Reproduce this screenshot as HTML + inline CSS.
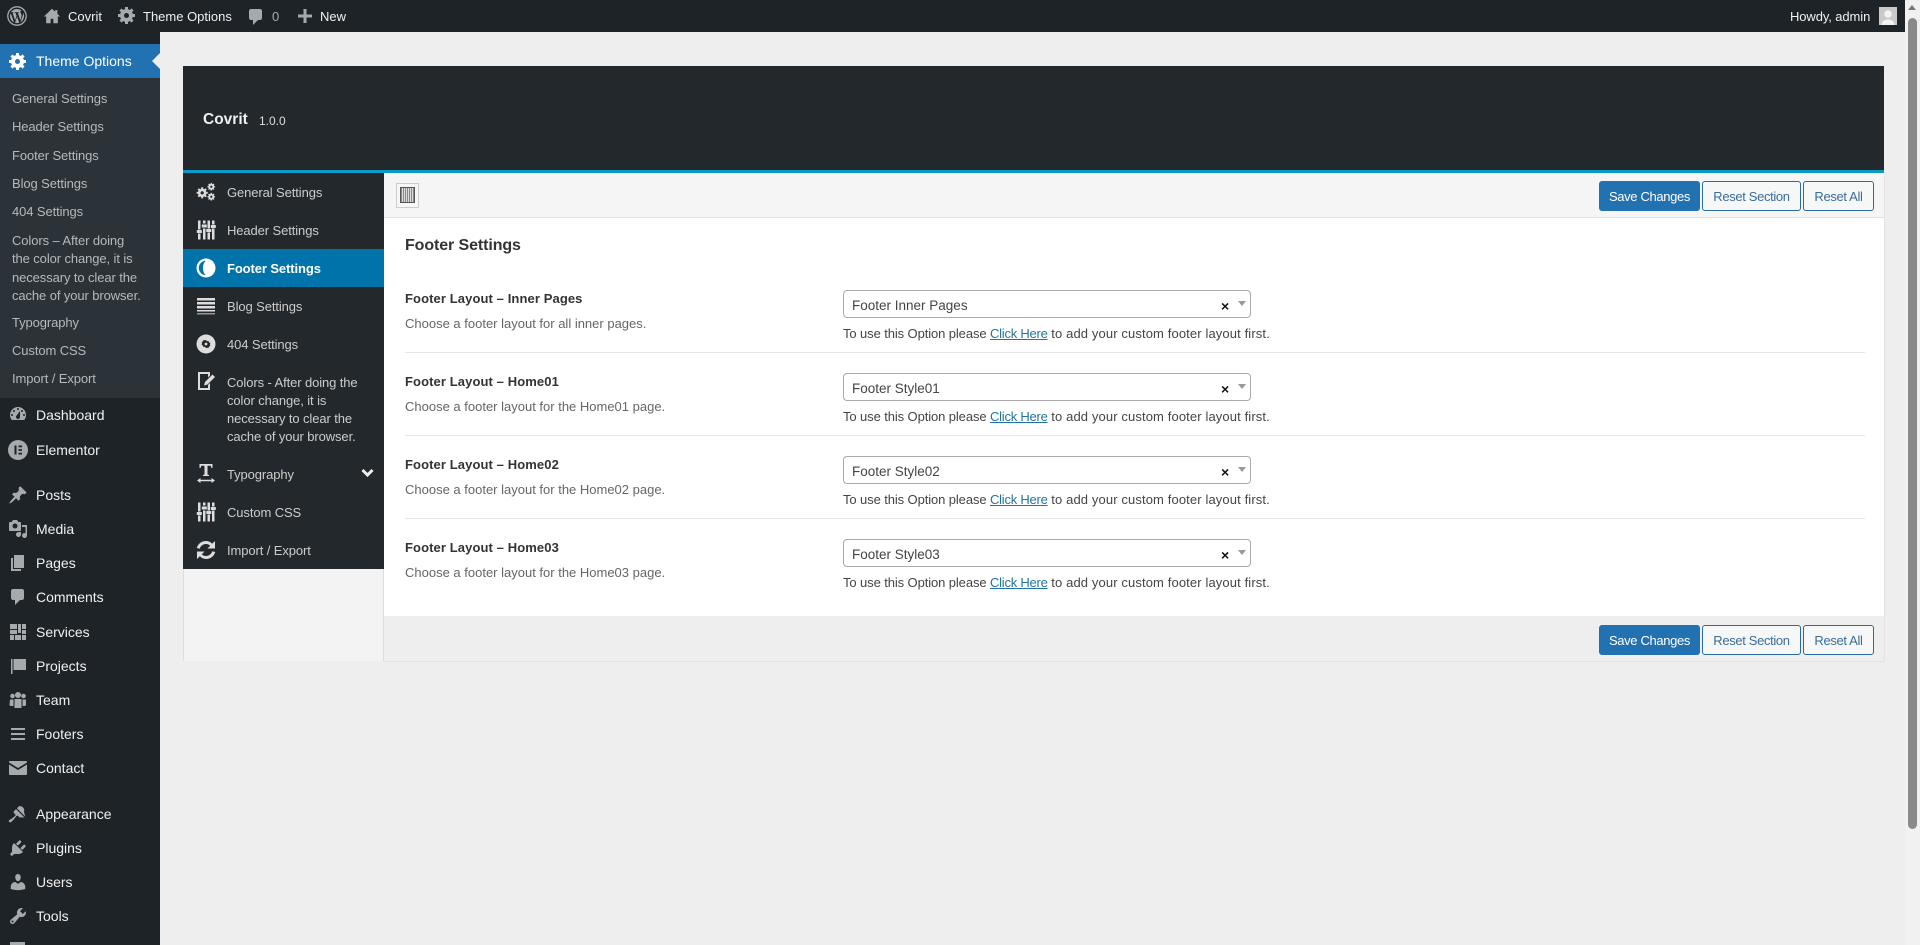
<!DOCTYPE html>
<html lang="en"><head><meta charset="utf-8"><title>Theme Options</title>
<style>
html,body{margin:0;padding:0;width:1920px;height:945px;overflow:hidden;background:#eee;font-family:"Liberation Sans",Arial,sans-serif;font-size:13px}
.a{position:absolute}
.t{position:absolute;white-space:nowrap;line-height:20px}
svg{position:absolute;overflow:visible}
#bar{left:0;top:0;width:1905px;height:32px;background:#1d2327}
.w{color:#f0f0f1;font-size:13px;margin-top:1px}
#side{left:0;top:32px;width:160px;height:913px;background:#1d2327}
.m{color:#f0f0f1;font-size:14px;left:36px}
.s{color:#b5b9bd;font-size:13px;left:12px;letter-spacing:-.1px;margin-top:1px}
.n{color:#ccc;font-size:13px;left:227px;letter-spacing:-.1px;margin-top:1px}
.lb{left:405px;font-weight:bold;font-size:13px;color:#333;letter-spacing:.1px}
.ds{left:405px;font-size:13px;color:#666;margin-top:1px}
.hp{left:843px;font-size:13px;color:#444;margin-top:1px;letter-spacing:.12px}
.hp i{font-style:normal;letter-spacing:-.1px}
.hp a{color:#21759b;letter-spacing:-.24px}
.sl{position:absolute;left:843px;width:406px;height:26px;border:1px solid #aaa;border-radius:4px;background:#fff}
.sl span{position:absolute;left:8px;top:5px;line-height:20px;font-size:13.5px;color:#444}
.sl b{position:absolute;left:377px;top:5px;line-height:20px;font-size:14px;color:#111}
.sl i{position:absolute;left:394px;top:10px;border:4px solid transparent;border-top:5px solid #999;border-bottom:0}
.sp{position:absolute;left:405px;width:1460px;height:1px;background:#e7e7e7}
.b{position:absolute;height:28px;line-height:30px;text-align:center;border:1px solid #2a6a9e;border-radius:3px;font-size:13px;box-sizing:content-box;color:#3a6d9a;background:#f6f7f7;letter-spacing:-.35px}
.b.p{background:#2271b1;border-color:#2271b1;color:#fff}
.ic{fill:#a7aaad}
.nv{fill:#ddd}
</style></head><body>
<svg width="0" height="0" style="position:absolute"><defs>
<symbol id="gear" viewBox="0 0 20 20"><path fill-rule="evenodd" d="M18 12h-2.180c-.17.7-.44 1.350-.81 1.930l1.540 1.540-2.100 2.100-1.540-1.540c-.58.36-1.230.63-1.910.79V19H8v-2.180c-.68-.16-1.330-.43-1.910-.79l-1.540 1.540-2.120-2.120 1.540-1.540c-.36-.58-.63-1.230-.79-1.910H1V9.030h2.170c.16-.7.44-1.350.8-1.940L2.430 5.550l2.100-2.100 1.540 1.540c.58-.37 1.240-.64 1.930-.81V2h3v2.180c.68.16 1.330.43 1.910.79l1.540-1.540 2.120 2.120-1.540 1.540c.36.59.64 1.240.8 1.940H18V12zM9.500 13a2.500 2.500 0 1 0 0-5 2.500 2.500 0 0 0 0 5z"/></symbol>
<symbol id="sliders" viewBox="0 0 20 20"><path d="M2 .5h2.500v9H2zM2 13.500h2.500v6H2zM7 .5h2.500v3H7zM7 8.500h2.500v11H7zM11.500 .5h2.500v8h-2.500zM11.500 12.500h2.500v7h-2.500zM16 .5h2.500v4H16zM16 8.500h2.500v11H16zM.8 10h5v3h-5zM5.800 4.500h5v3h-5zM10.300 9h5v3h-5zM14.800 5h5v3h-5z"/></symbol>
</defs></svg>

<div id="side" class="a"></div>
<div class="a" style="left:0;top:44px;width:160px;height:34px;background:#2271b1"></div>
<div class="a" style="left:0;top:78px;width:160px;height:320px;background:#2c3338"></div>
<div class="a" style="left:152px;top:53px;border:8px solid transparent;border-right-color:#eee;border-left:0"></div>
<svg style="left:8px;top:51px" width="20" height="20" fill="#fff"><use href="#gear"/></svg>
<div class="t m" style="top:51px;color:#fff">Theme Options</div>
<div class="t s" style="top:88px">General Settings</div>
<div class="t s" style="top:116px">Header Settings</div>
<div class="t s" style="top:145px">Footer Settings</div>
<div class="t s" style="top:173px">Blog Settings</div>
<div class="t s" style="top:201px">404 Settings</div>
<div class="t s" style="top:230px">Colors – After doing</div>
<div class="t s" style="top:248px">the color change, it is</div>
<div class="t s" style="top:267px">necessary to clear the</div>
<div class="t s" style="top:285px">cache of your browser.</div>
<div class="t s" style="top:312px">Typography</div>
<div class="t s" style="top:340px">Custom CSS</div>
<div class="t s" style="top:368px">Import / Export</div>

<div class="t m" style="top:405px">Dashboard</div>
<div class="t m" style="top:440px">Elementor</div>
<div class="t m" style="top:485px">Posts</div>
<div class="t m" style="top:519px">Media</div>
<div class="t m" style="top:553px">Pages</div>
<div class="t m" style="top:587px">Comments</div>
<div class="t m" style="top:622px">Services</div>
<div class="t m" style="top:656px">Projects</div>
<div class="t m" style="top:690px">Team</div>
<div class="t m" style="top:724px">Footers</div>
<div class="t m" style="top:758px">Contact</div>
<div class="t m" style="top:804px">Appearance</div>
<div class="t m" style="top:838px">Plugins</div>
<div class="t m" style="top:872px">Users</div>
<div class="t m" style="top:906px">Tools</div>

<svg class="ic" style="left:8px;top:404px" width="20" height="20" viewBox="0 0 20 20"><path fill-rule="evenodd" d="M3.760 16h12.480c1.100-1.370 1.760-3.110 1.760-5 0-4.420-3.580-8-8-8s-8 3.580-8 8c0 1.890.66 3.630 1.760 5zM10 4c.55 0 1 .45 1 1s-.45 1-1 1-1-.45-1-1 .45-1 1-1zM6 6c.55 0 1 .45 1 1s-.45 1-1 1-1-.45-1-1 .45-1 1-1zm8 0c.55 0 1 .45 1 1s-.45 1-1 1-1-.45-1-1 .45-1 1-1zm-5.370 5.550L12 7v6c0 1.100-.9 2-2 2s-2-.9-2-2c0-.57.24-1.080.63-1.450zM4 10c.55 0 1 .45 1 1s-.45 1-1 1-1-.45-1-1 .45-1 1-1zm12 0c.55 0 1 .45 1 1s-.45 1-1 1-1-.45-1-1 .45-1 1-1z"/></svg>
<svg class="ic" style="left:8px;top:440px" width="20" height="20" viewBox="0 0 20 20"><path fill-rule="evenodd" d="M10 0a10 10 0 1 0 0 20 10 10 0 0 0 0-20zM6.500 5.500h2v9h-2zM10.500 5.500h3.500v1.800h-3.500zM10.500 9.100h3.500v1.800h-3.500zM10.500 12.700h3.500v1.800h-3.500z"/></svg>
<svg class="ic" style="left:8px;top:485px" width="20" height="20" viewBox="0 0 20 20"><path d="M10.440 3.020l1.820-1.820 6.360 6.350-1.830 1.820c-1.050-.68-2.480-.57-3.410.36l-.75.750c-.92.930-1.040 2.350-.35 3.410l-1.830 1.820-2.410-2.410-2.800 2.790c-.42.420-3.380 2.710-3.800 2.290s1.860-3.390 2.280-3.810l2.790-2.790L4.100 9.360l1.830-1.820c1.050.69 2.480.57 3.400-.36l.75-.75c.93-.92 1.050-2.350.36-3.410z"/></svg>
<svg class="ic" style="left:8px;top:519px" width="20" height="20" viewBox="0 0 20 20"><path d="M13 11V4c0-.55-.45-1-1-1h-1.670L9 1H5L3.670 3H2c-.55 0-1 .45-1 1v7c0 .55.45 1 1 1h10c.55 0 1-.45 1-1zM7 4.500a2.500 2.500 0 1 1 0 5 2.500 2.500 0 0 1 0-5zM14 6h5v10.500a2.500 2.500 0 1 1-1.500-2.300V8h-3.500zM13 15.500a2.500 2.500 0 1 1-1.500-2.300V13h1.500z"/></svg>
<svg class="ic" style="left:8px;top:553px" width="20" height="20" viewBox="0 0 20 20"><path d="M6 15V2h10v13H6zm-1 1h8v2H3V5h2v11z"/></svg>
<svg class="ic" style="left:8px;top:587px" width="20" height="20" viewBox="0 0 20 20"><path d="M5 2h9c1.100 0 2 .9 2 2v7c0 1.100-.9 2-2 2h-2l-5 5v-5H5c-1.100 0-2-.9-2-2V4c0-1.100.9-2 2-2z"/></svg>
<svg class="ic" style="left:8px;top:622px" width="20" height="20" viewBox="0 0 20 20"><path d="M2 2h7v5H2zM10 2h3v9h-3zM14 2h4v5h-4zM2 8h7v4H2zM14 8h4v4h-4zM2 13h4v5H2zM7 13h6v5H7zM14 13h4v5h-4z"/></svg>
<svg class="ic" style="left:8px;top:656px" width="20" height="20" viewBox="0 0 20 20"><path d="M3 3h1.500v15H3zM5.500 3H18v11H5.500z"/></svg>
<svg class="ic" style="left:8px;top:690px" width="20" height="20" viewBox="0 0 20 20"><circle cx="10" cy="5" r="3"/><circle cx="4.500" cy="6" r="2.300"/><circle cx="15.500" cy="6" r="2.300"/><path d="M6.500 9h7v9h-7zM2 9.500h3.500V16H3a1.500 1.500 0 0 1-1.500-1.500zM14.500 9.500H18v5a1.500 1.500 0 0 1-1.500 1.500h-2z"/></svg>
<svg class="ic" style="left:8px;top:724px" width="20" height="20" viewBox="0 0 20 20"><path d="M3 4h14v2H3zM3 9h14v2H3zM3 14h14v2H3z"/></svg>
<svg class="ic" style="left:8px;top:758px" width="20" height="20" viewBox="0 0 20 20"><path d="M2 3h16a1 1 0 0 1 1 1v.5L10 10 1 4.500V4a1 1 0 0 1 1-1zM1 6.500l9 5.500 9-5.500V16a1 1 0 0 1-1 1H2a1 1 0 0 1-1-1z"/></svg>
<svg class="ic" style="left:8px;top:803px" width="20" height="20" viewBox="0 0 20 20"><path transform="translate(0 .5) scale(1.200)" d="M14.480 11.060L7.410 3.990l1.500-1.500c.5-.56 2.300-.47 3.540.77 1.210 1.210 1.320 3.030.77 3.540zm-.7.71L6.700 4.700 4.930 6.470c-.39.39-.39 1.020 0 1.410l1.060 1.060c.39.39.39 1.030 0 1.420-.6.6-1.430 1.110-2.210 1.690-.35.26-.7.53-1.010.84C1.430 13.230 0 14.410 1 15.410c.99 1 2.170-.43 3.520-1.780.31-.31.58-.66.85-1.020.57-.78 1.080-1.600 1.690-2.210.39-.39 1.020-.39 1.410 0l1.060 1.060c.39.39 1.020.39 1.410 0z" /></svg>
<svg class="ic" style="left:8px;top:838px" width="20" height="20" viewBox="0 0 20 20"><path d="M13.110 4.360L9.870 7.600 8 5.730l3.240-3.240c.35-.34 1.050-.2 1.560.32.520.51.660 1.210.31 1.550zm-8 1.770l.910-1.120 9.010 9.010-1.190.84c-.71.710-2.630 1.160-3.820 1.160H6.140L4.900 17.260c-.59.59-1.540.59-2.120 0a1.500 1.500 0 0 1 0-2.120l1.240-1.240v-3.880c0-1.130.4-3.170 1.090-3.890zm7.260 3.970l3.240-3.240c.34-.35 1.040-.21 1.550.31.520.51.660 1.210.31 1.550l-3.240 3.250z"/></svg>
<svg class="ic" style="left:8px;top:872px" width="20" height="20" viewBox="0 0 20 20"><path d="M10 9.250c-2.270 0-2.730-3.440-2.730-3.440C7 4.020 7.820 2 9.970 2c2.160 0 2.980 2.020 2.710 3.810 0 0-.41 3.440-2.680 3.440zm0 2.570L12.720 10c2.390 0 4.520 2.330 4.520 4.530v2.490s-3.650 1.130-7.240 1.130c-3.650 0-7.240-1.130-7.240-1.130v-2.490c0-2.250 1.940-4.480 4.470-4.480z"/></svg>
<svg class="ic" style="left:8px;top:906px" width="20" height="20" viewBox="0 0 20 20"><path d="M16.680 9.770c-1.340 1.340-3.300 1.670-4.950.99l-5.410 6.520c-.99.990-2.590.99-3.580 0s-.99-2.590 0-3.570l6.520-5.420c-.68-1.650-.35-3.610.99-4.950 1.280-1.280 3.120-1.620 4.720-1.060l-2.890 2.890 2.820 2.820 2.860-2.870c.53 1.580.18 3.390-1.080 4.650zM3.810 16.210c.4.390 1.040.39 1.430 0 .4-.4.400-1.040 0-1.430-.39-.4-1.030-.4-1.430 0a1.030 1.030 0 0 0 0 1.430z"/></svg>
<div class="a" style="left:10px;top:942px;width:15px;height:3px;background:#a7aaad"></div>

<div id="bar" class="a"></div>
<svg style="left:7px;top:6px" width="20" height="20" viewBox="0 0 20 20"><circle cx="10" cy="10" r="9.200" fill="none" stroke="#a7aaad" stroke-width="1.300"/><path fill="#a7aaad" d="M3 10c0 2.800 1.600 5.200 4 6.300L3.700 7.100A7 7 0 0 0 3 10zm11.600-.4c0-.9-.3-1.500-.6-2-.3-.6-.7-1-.7-1.600 0-.6.5-1.200 1.200-1.200h.1A7 7 0 0 0 4 6.100h.4c.7 0 1.900-.1 1.900-.1.400 0 .4.500 0 .6l-.8.100 2.600 7.700 1.500-4.600-1.100-3-.7-.1c-.4 0-.3-.6 0-.6 0 0 1.200.1 1.900.1s1.900-.1 1.900-.1c.4 0 .4.500 0 .6l-.8.100 2.600 7.600.7-2.400c.3-1 .5-1.700.5-2.400zm-4.500 1L8 16.800a7 7 0 0 0 4.300-.1zm6-3.900c0 .3 0 .6 0 .9 0 .7-.1 1.500-.5 2.500l-2.100 6.100a7 7 0 0 0 2.600-9.500z"/></svg>
<svg class="ic" style="left:43px;top:7px" width="18" height="18" viewBox="0 0 20 20"><path d="M10 2L1 10.500h2.500V18h5v-5h3v5h5v-7.500H19l-3-2.800V3.500h-2.500v1.800z"/></svg>
<div class="t w" style="left:68px;top:6px">Covrit</div>
<svg class="ic" style="left:117px;top:5px" width="20" height="20"><use href="#gear"/></svg>
<div class="t w" style="left:143px;top:6px">Theme Options</div>
<svg class="ic" style="left:246px;top:7px" width="20" height="20" viewBox="0 0 20 20"><path d="M5 2h9c1.100 0 2 .9 2 2v7c0 1.100-.9 2-2 2h-2l-5 5v-5H5c-1.100 0-2-.9-2-2V4c0-1.100.9-2 2-2z"/></svg>
<div class="t w" style="left:272px;top:6px;color:#a7aaad">0</div>
<svg class="ic" style="left:295px;top:6px" width="20" height="20" viewBox="0 0 20 20"><path d="M8.500 3h3v5.500H17v3h-5.500V17h-3v-5.500H3v-3h5.500z"/></svg>
<div class="t w" style="left:320px;top:6px">New</div>
<div class="t w" style="left:1790px;top:6px;letter-spacing:-.1px">Howdy, admin</div>
<div class="a" style="left:1879px;top:7px;width:18px;height:18px;background:#c9c9c9"></div>
<svg style="left:1879px;top:7px" width="18" height="18"><circle cx="9" cy="7" r="3.800" fill="#f2f2f2"/><path d="M2.500 18c.5-4 3-5.500 6.500-5.500s6 1.500 6.500 5.500z" fill="#f2f2f2"/></svg>

<!-- scrollbar -->
<div class="a" style="left:1905px;top:0;width:15px;height:945px;background:#f1f1f1"></div>
<div class="a" style="left:1908px;top:18px;width:9px;height:811px;background:#8a8a8a;border-radius:5px"></div>
<div class="a" style="left:1908px;top:5px;border:4.500px solid transparent;border-bottom:5px solid #777;border-top:0"></div>

<!-- panel -->
<div class="a" style="left:183px;top:66px;width:1701px;height:107px;background:#23282d"></div>
<div class="a" style="left:183px;top:170px;width:1701px;height:3px;background:#0a9ac8"></div>
<div class="t" style="left:203px;top:110px;font-size:15.500px;font-weight:bold;color:#f0f0f0">Covrit</div>
<div class="t" style="left:259px;top:111px;font-size:12px;color:#ddd">1.0.0</div>

<div class="a" style="left:183px;top:173px;width:201px;height:488px;background:#f3f3f3;border-left:1px solid #ddd;box-sizing:border-box;border-right:1px solid #ddd"></div>
<div class="a" style="left:183px;top:173px;width:201px;height:396px;background:#23282d"></div>
<div class="a" style="left:183px;top:249px;width:201px;height:38px;background:#0073aa"></div>

<div class="a" style="left:384px;top:173px;width:1500px;height:44px;background:#f5f5f5;border-bottom:1px solid #e0e0e0"></div>
<div class="a" style="left:384px;top:218px;width:1500px;height:398px;background:#fff"></div>
<div class="a" style="left:384px;top:616px;width:1500px;height:45px;background:#eee;border-bottom:1px solid #e2e2e2"></div>
<div class="a" style="left:1884px;top:173px;width:1px;height:489px;background:#e4e4e4"></div>

<div class="a" style="left:396px;top:183px;width:21px;height:23px;border:1px solid #ccc;background:#f7f7f7"></div>
<div class="a" style="left:400px;top:187px;width:15px;height:16px;border:1px solid #555;box-sizing:border-box;background:repeating-linear-gradient(90deg,#888 0 1px,#ddd 1px 2px)"></div>

<svg class="nv" style="left:196px;top:182px" width="20" height="20"><use href="#gear" x="0" y="4" width="13" height="13"/><use href="#gear" x="11" y="0" width="9" height="9"/><use href="#gear" x="11" y="10" width="9" height="9"/></svg>
<svg class="nv" style="left:196px;top:220px" width="20" height="20"><use href="#sliders"/></svg>
<svg style="left:196px;top:258px" width="20" height="20" viewBox="0 0 20 20"><path fill="#fff" fill-rule="evenodd" d="M10 .5a9.500 9.500 0 1 0 0 19 9.500 9.500 0 0 0 0-19zM10 2.800c-4 0-7.200 3.200-7.200 7.200s3.200 7.200 7.200 7.200c-1.500-1-3-3.500-3-7.200s1.500-6.200 3-7.200z"/></svg>
<svg class="nv" style="left:196px;top:296px" width="20" height="20" viewBox="0 0 20 20"><path d="M1 2h18v2.500H1zM1 6h18v2.500H1zM1 10h18v2.500H1zM1 14h18v1.500H1z"/><path d="M1 17h18v1.500H1z" opacity=".6"/></svg>
<svg class="nv" style="left:196px;top:334px" width="20" height="20" viewBox="0 0 20 20"><path fill-rule="evenodd" d="M10 .5a9.500 9.500 0 1 0 0 19 9.500 9.500 0 0 0 0-19zM10 6l1 1.200 1.500-.3.400 1.500 1.500.600-.5 1.500.5 1.500-1.500.600-.4 1.500-1.500-.3L10 14l-1-1.200-1.500.3-.4-1.500-1.500-.6.500-1.500-.5-1.500 1.500-.6.400-1.500 1.500.3z"/><circle cx="10" cy="10" r="1.400"/></svg>
<svg class="nv" style="left:196px;top:371px" width="20" height="20" viewBox="0 0 20 20"><path fill-rule="evenodd" d="M2 1h12v3.500L12 6.500V3H4v14h8v-3l2-2v7H2z"/><path d="M16.500 3.500L19 6l-7.500 7.500-3.500 1 1-3.500z"/></svg>
<svg class="nv" style="left:196px;top:464px" width="20" height="20" viewBox="0 0 20 20"><path d="M3.500 0h13v4h-1l-.8-2.300h-3.200v8.800l1.500.5v1H7v-1l1.500-.5V1.700H5.300L4.500 4h-1z"/><path d="M1 16.500L4.500 14v1.800h11V14l3.500 2.500-3.500 2.500v-1.800h-11V19z"/></svg>
<svg class="nv" style="left:196px;top:502px" width="20" height="20"><use href="#sliders"/></svg>
<svg class="nv" style="left:196px;top:540px" width="20" height="20" viewBox="0 0 20 20"><path d="M10 1c2.400 0 4.600 1 6.100 2.700L19 1v7.500h-7.500l2.700-2.700C13.200 4.700 11.700 4 10 4 7 4 4.500 6 3.700 8.700L.8 8C1.800 4 5.500 1 10 1zM1 11.500h7.500l-2.700 2.700C6.800 15.300 8.300 16 10 16c3 0 5.500-2 6.300-4.700l2.900.7C18.200 16 14.500 19 10 19c-2.400 0-4.600-1-6.100-2.700L1 19z"/></svg>

<div class="t n" style="top:182px">General Settings</div>
<div class="t n" style="top:220px">Header Settings</div>
<div class="t n" style="top:258px;color:#fff;font-weight:bold;letter-spacing:-.1px">Footer Settings</div>
<div class="t n" style="top:296px">Blog Settings</div>
<div class="t n" style="top:334px">404 Settings</div>
<div class="t n" style="top:372px">Colors - After doing the</div>
<div class="t n" style="top:390px">color change, it is</div>
<div class="t n" style="top:408px">necessary to clear the</div>
<div class="t n" style="top:426px">cache of your browser.</div>
<div class="t n" style="top:464px">Typography</div>
<div class="t n" style="top:502px">Custom CSS</div>
<div class="t n" style="top:540px">Import / Export</div>
<svg style="left:361px;top:468px" width="13" height="10" viewBox="0 0 13 10"><path d="M1.500 2l5 5 5-5" fill="none" stroke="#eee" stroke-width="3"/></svg>

<div class="b p" style="left:1599px;top:181px;width:99px">Save Changes</div>
<div class="b" style="left:1702px;top:181px;width:97px">Reset Section</div>
<div class="b" style="left:1803px;top:181px;width:69px">Reset All</div>
<div class="b p" style="left:1599px;top:625px;width:99px">Save Changes</div>
<div class="b" style="left:1702px;top:625px;width:97px">Reset Section</div>
<div class="b" style="left:1803px;top:625px;width:69px">Reset All</div>

<div class="t" style="left:405px;top:236px;font-size:16px;font-weight:bold;color:#333;letter-spacing:-.1px">Footer Settings</div>

<div class="t lb" style="top:289px">Footer Layout – Inner Pages</div>
<div class="t ds" style="top:313px">Choose a footer layout for all inner pages.</div>
<div class="sl" style="top:290px"><span>Footer Inner Pages</span><b>×</b><i></i></div>
<div class="t hp" style="top:323px"><i>To use this Option please </i><a href="#">Click Here</a> to add your custom footer layout first.</div>
<div class="sp" style="top:352px"></div>

<div class="t lb" style="top:372px">Footer Layout – Home01</div>
<div class="t ds" style="top:396px">Choose a footer layout for the Home01 page.</div>
<div class="sl" style="top:373px"><span>Footer Style01</span><b>×</b><i></i></div>
<div class="t hp" style="top:406px"><i>To use this Option please </i><a href="#">Click Here</a> to add your custom footer layout first.</div>
<div class="sp" style="top:435px"></div>

<div class="t lb" style="top:455px">Footer Layout – Home02</div>
<div class="t ds" style="top:479px">Choose a footer layout for the Home02 page.</div>
<div class="sl" style="top:456px"><span>Footer Style02</span><b>×</b><i></i></div>
<div class="t hp" style="top:489px"><i>To use this Option please </i><a href="#">Click Here</a> to add your custom footer layout first.</div>
<div class="sp" style="top:518px"></div>

<div class="t lb" style="top:538px">Footer Layout – Home03</div>
<div class="t ds" style="top:562px">Choose a footer layout for the Home03 page.</div>
<div class="sl" style="top:539px"><span>Footer Style03</span><b>×</b><i></i></div>
<div class="t hp" style="top:572px"><i>To use this Option please </i><a href="#">Click Here</a> to add your custom footer layout first.</div>
</body></html>
